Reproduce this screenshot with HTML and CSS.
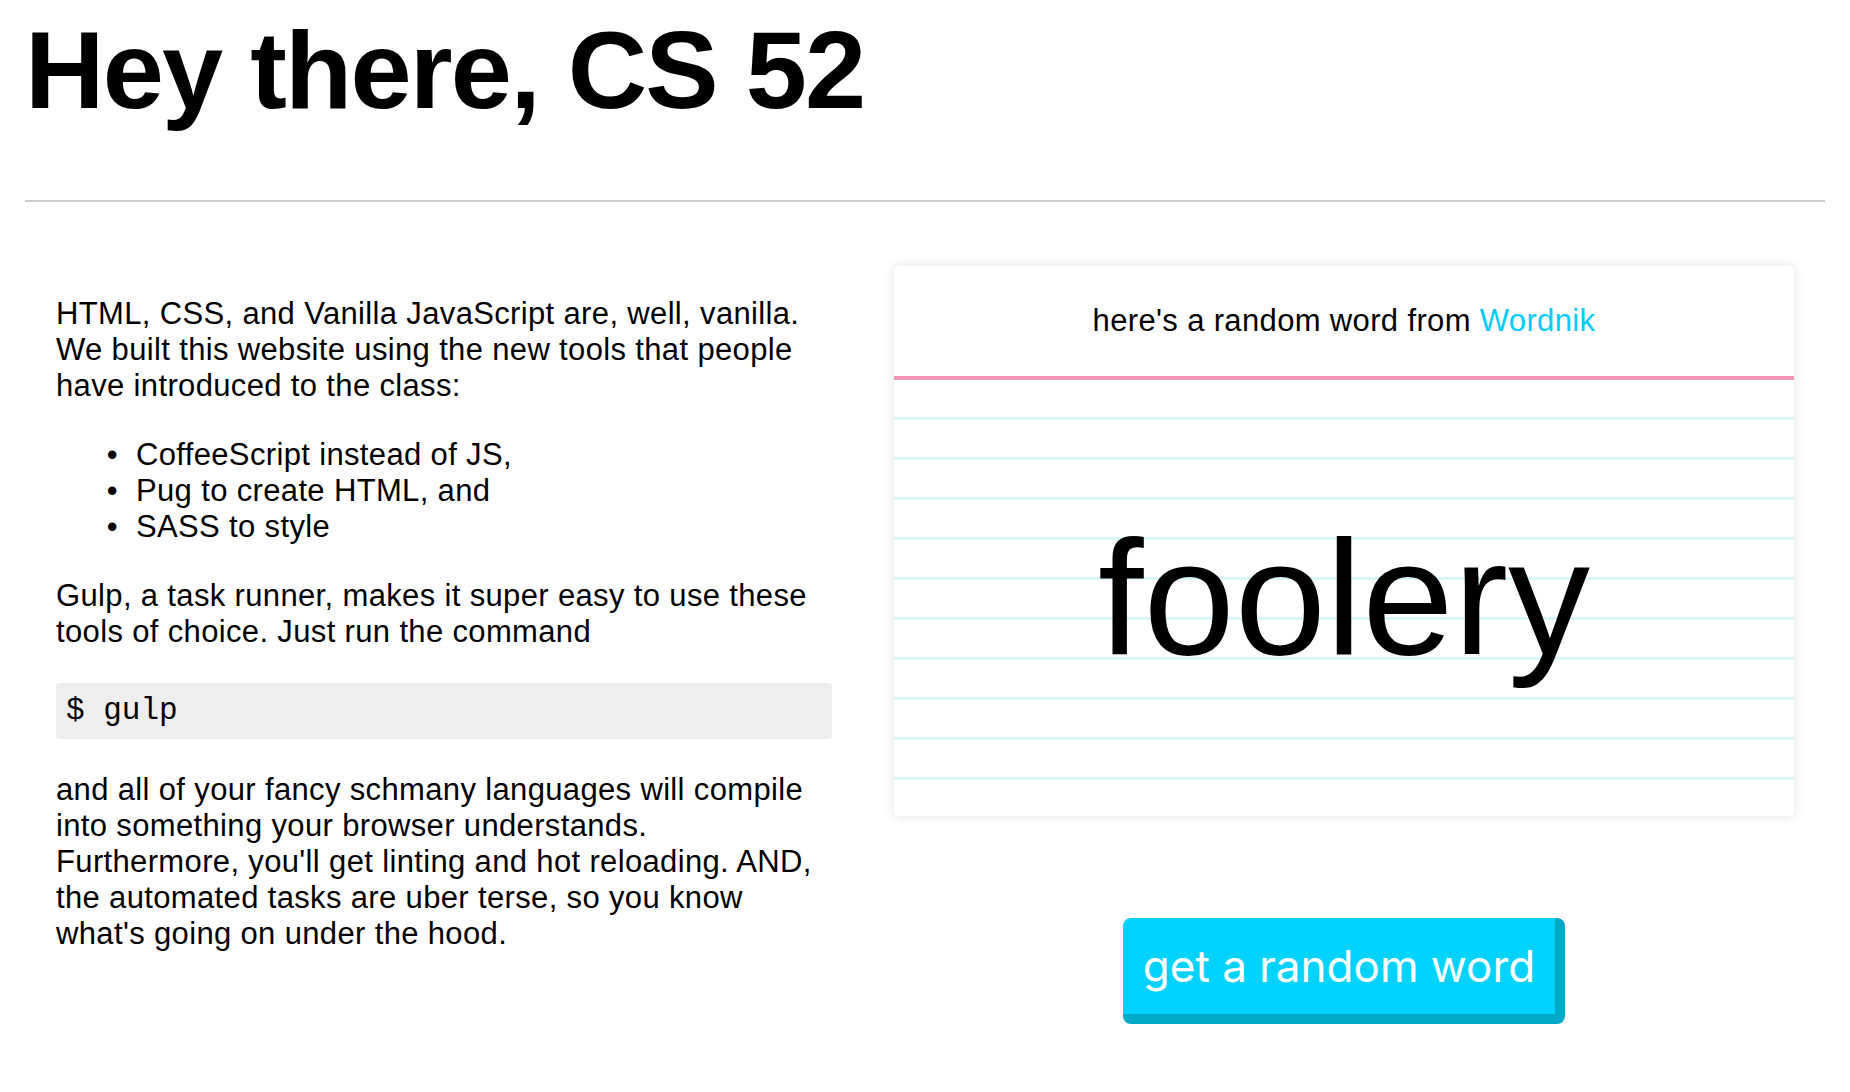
FILE: index.html
```html
<!DOCTYPE html>
<html lang="en">
<head>
<meta charset="utf-8">
<title>CS 52</title>
<link rel="stylesheet" href="styles.css">
</head>
<body>
<div class="page">
  <h1 class="title">Hey there, CS 52</h1>
  <hr class="rule">
  <div class="row">
    <div class="about">
      <p class="text">HTML, CSS, and Vanilla JavaScript are, well, vanilla. We built this website using the new tools that people have introduced to the class:</p>
      <ul class="tools">
        <li>CoffeeScript instead of JS,</li>
        <li>Pug to create HTML, and</li>
        <li>SASS to style</li>
      </ul>
      <p class="text">Gulp, a task runner, makes it super easy to use these tools of choice. Just run the command</p>
      <pre class="code">$ gulp</pre>
      <p class="text">and all of your fancy schmany languages will compile into something your browser understands. Furthermore, you'll get linting and hot reloading. AND, the automated tasks are uber terse, so you know what's going on under the hood.</p>
    </div>
    <div class="side">
      <div class="card">
        <div class="card-head"><span class="card-label">here's a random word from <a class="link" href="#">Wordnik</a></span></div>
        <div class="card-body"><span class="word">foolery</span></div>
      </div>
      <button class="btn" type="button">get a random word</button>
    </div>
  </div>
</div>
</body>
</html>
```
FILE: styles.css
```css
html, body {
  margin: 0;
  padding: 0;
  background: #fff;
  color: #000;
}

body {
  font-family: "Liberation Sans", Arial, Helvetica, sans-serif;
}

.page {
  padding: 0 25px;
}

.title {
  margin: 0;
  padding-top: 7px;
  font-size: 110px;
  font-weight: bold;
  line-height: 126px;
  letter-spacing: -1.8px;
}

.rule {
  margin: 67px 0 0;
  border: 0;
  height: 2px;
  background: #cccccc;
}

.row {
  display: flex;
  align-items: flex-start;
  margin-top: 64px;
  padding: 0 31px;
  gap: 62px;
}

.about {
  width: 776px;
  flex: none;
  padding-top: 30px;
  font-size: 31px;
  letter-spacing: 0.35px;
  line-height: 36px;
}

.text {
  margin: 0 0 33px;
}

.tools {
  margin: 0 0 33px;
  padding-left: 80px;
}

.tools li::marker {
  content: "\2022\00a0\00a0";
}

.code {
  margin: 0 0 33px;
  padding: 10px;
  background: #eeeeee;
  border-radius: 4px;
  font-family: "Liberation Mono", "Courier New", monospace;
  font-size: 31px;
  letter-spacing: 0;
  line-height: 36px;
}

.side {
  width: 900px;
  flex: none;
  display: flex;
  flex-direction: column;
  align-items: center;
}

.card {
  width: 900px;
  background: #fff;
  border-radius: 4px;
  box-shadow: 0 0 12px rgba(0, 0, 0, 0.12);
  overflow: hidden;
}

.card-head {
  height: 110px;
  display: flex;
  align-items: center;
  justify-content: center;
  font-size: 31px;
  letter-spacing: 0.35px;
  border-bottom: 4px solid #f294b6;
}

.link {
  color: #00cbfa;
  text-decoration: none;
}

.card-body {
  height: 436px;
  display: flex;
  align-items: center;
  justify-content: center;
  background-image: repeating-linear-gradient(
    to bottom,
    transparent 0,
    transparent 37px,
    #e6f9fe 37px,
    #d6f4fc 38px,
    #d6f4fc 39px,
    #e6f9fe 40px
  );
}

.word {
  font-size: 164px;
  line-height: normal;
}

.btn {
  margin-top: 102px;
  padding: 0 20px;
  height: 106px;
  background: #02d2fe;
  color: #fff;
  border: 0;
  border-right: 10px solid #01a8c7;
  border-bottom: 10px solid #01a8c7;
  border-radius: 8px;
  font-family: Inter, Roboto, "Liberation Sans", sans-serif;
  font-size: 44px;
  cursor: pointer;
}
```
